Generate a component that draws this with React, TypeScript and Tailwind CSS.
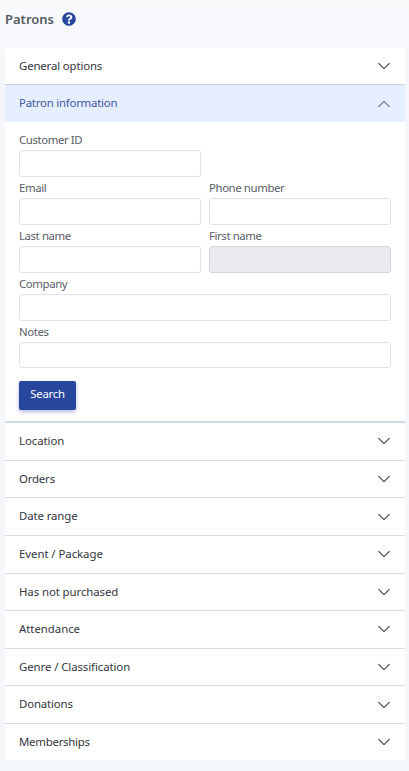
import React from "react";

type Section = { label: string; tracking: string };

const sections: Section[] = [
  { label: "Location", tracking: "tracking-[-0.06px]" },
  { label: "Orders", tracking: "tracking-[-0.17px]" },
  { label: "Date range", tracking: "tracking-[-0.1px]" },
  { label: "Event / Package", tracking: "tracking-[-0.05px]" },
  { label: "Has not purchased", tracking: "tracking-[-0.08px]" },
  { label: "Attendance", tracking: "tracking-[-0.03px]" },
  { label: "Genre / Classification", tracking: "tracking-[-0.08px]" },
  { label: "Donations", tracking: "tracking-[-0.14px]" },
  { label: "Memberships", tracking: "tracking-[-0.24px]" },
];

function Chevron({ className = "text-[#45474d]" }: { className?: string }) {
  return (
    <svg
      viewBox="0 0 16 16"
      fill="currentColor"
      stroke="currentColor"
      strokeWidth="0.3"
      className={`size-3.5 shrink-0 ${className}`}
    >
      <path
        fillRule="evenodd"
        d="M1.646 4.646a.5.5 0 0 1 .708 0L8 10.293l5.646-5.647a.5.5 0 0 1 .708.708l-6 6a.5.5 0 0 1-.708 0l-6-6a.5.5 0 0 1 0-.708z"
      />
    </svg>
  );
}

function HelpIcon() {
  return (
    <svg viewBox="0 0 512 512" fill="currentColor" className="size-3.5 text-[#26479c]">
      <path d="M504 256c0 137-111 248-248 248S8 393 8 256C8 119.100 119 8 256 8s248 111.100 248 248zM262.700 90c-54.500 0-89.300 23-116.500 63.800-3.500 5.300-2.400 12.400 2.700 16.300l34.700 26.300c5.200 3.900 12.600 3 16.700-2.100 17.900-22.700 30.100-35.800 57.300-35.800 20.400 0 45.700 13.100 45.700 33 0 15-12.400 22.700-32.500 34C247.100 238.500 216 255 216 296v4c0 6.600 5.400 12 12 12h56c6.600 0 12-5.400 12-12v-1.300c0-28.800 84.200-30 84.200-108C380.200 131.900 319.200 90 262.700 90zM256 338c-25.400 0-46 20.600-46 46s20.600 46 46 46 46-20.600 46-46-20.600-46-46-46z" />
    </svg>
  );
}

type FieldProps = { label: string; wide?: boolean; first?: boolean; disabled?: boolean; inputClass?: string };

function Field({ label, wide, first, disabled, inputClass = "h-[27px]" }: FieldProps) {
  return (
    <label className={`flex h-12 flex-col ${wide ? "col-span-2" : ""} ${first ? "col-start-1 col-end-2" : ""}`}>
      <span className="h-[21px] pt-0.5 text-[11.4px] leading-[18px] tracking-[-0.4px] text-[#595d66]">{label}</span>
      <input
        disabled={disabled}
        className={`w-full rounded-[3px] border px-2 outline-none ${inputClass} ${
          disabled ? "border-[#d3d5d8] bg-[#e9ebee]" : "border-[#dee2e6] bg-white"
        }`}
      />
    </label>
  );
}

export default function App() {
  return (
    <main className="h-[771px] bg-linear-to-b from-[#f9fafc] via-[#f4f6fa] via-10% to-[#f4f7fa] pl-[5px] pr-1 font-['Noto_Sans','Open_Sans',sans-serif] text-[11.4px] text-[#33363d]">
      <header className="flex h-12 items-start gap-2 pt-3">
        <h1 className="text-[13px] font-semibold leading-[15px] text-[#565a63]">Patrons</h1>
        <HelpIcon />
      </header>

      <div className="w-[400px] bg-white">
        <button className="flex h-[37px] w-full items-center justify-between border-b border-[#c8d1de] px-3.5">
          <span className="tracking-[-0.14px]">General options</span>
          <Chevron />
        </button>

        <button className="flex h-[37px] w-full items-center justify-between bg-[#e6efff] px-3.5 text-[#3f57a3]">
          <span className="pb-px tracking-[-0.22px]">Patron information</span>
          <Chevron className="rotate-180 text-[#66708c]" />
        </button>

        <section className="h-[301.2px] border-b-2 border-[#d0dae2] px-3.5 pt-[7px]">
          <div className="grid grid-cols-2 gap-x-2">
            <Field label="Customer ID" first />
            <Field label="Email" first />
            <Field label="Phone number" />
            <Field label="Last name" />
            <Field label="First name" disabled />
            <Field label="Company" wide />
            <Field label="Notes" wide inputClass="h-[26px]" />
          </div>
          <button className="mt-3 h-[29px] w-[57px] rounded-[2px] bg-[#26479c] pb-[3px] text-[11.4px] tracking-[-0.25px] text-white shadow-[0_2px_4px_#b9b8e5]">
            Search
          </button>
        </section>

        {sections.map(({ label, tracking }) => (
          <button
            key={label}
            className="flex h-[37.6px] w-full items-center justify-between border-b border-[#d9dbde] px-3.5 last:h-[36px] last:border-b-0"
          >
            <span className={`pb-[1.5px] ${tracking}`}>{label}</span>
            <Chevron />
          </button>
        ))}
      </div>
    </main>
  );
}
